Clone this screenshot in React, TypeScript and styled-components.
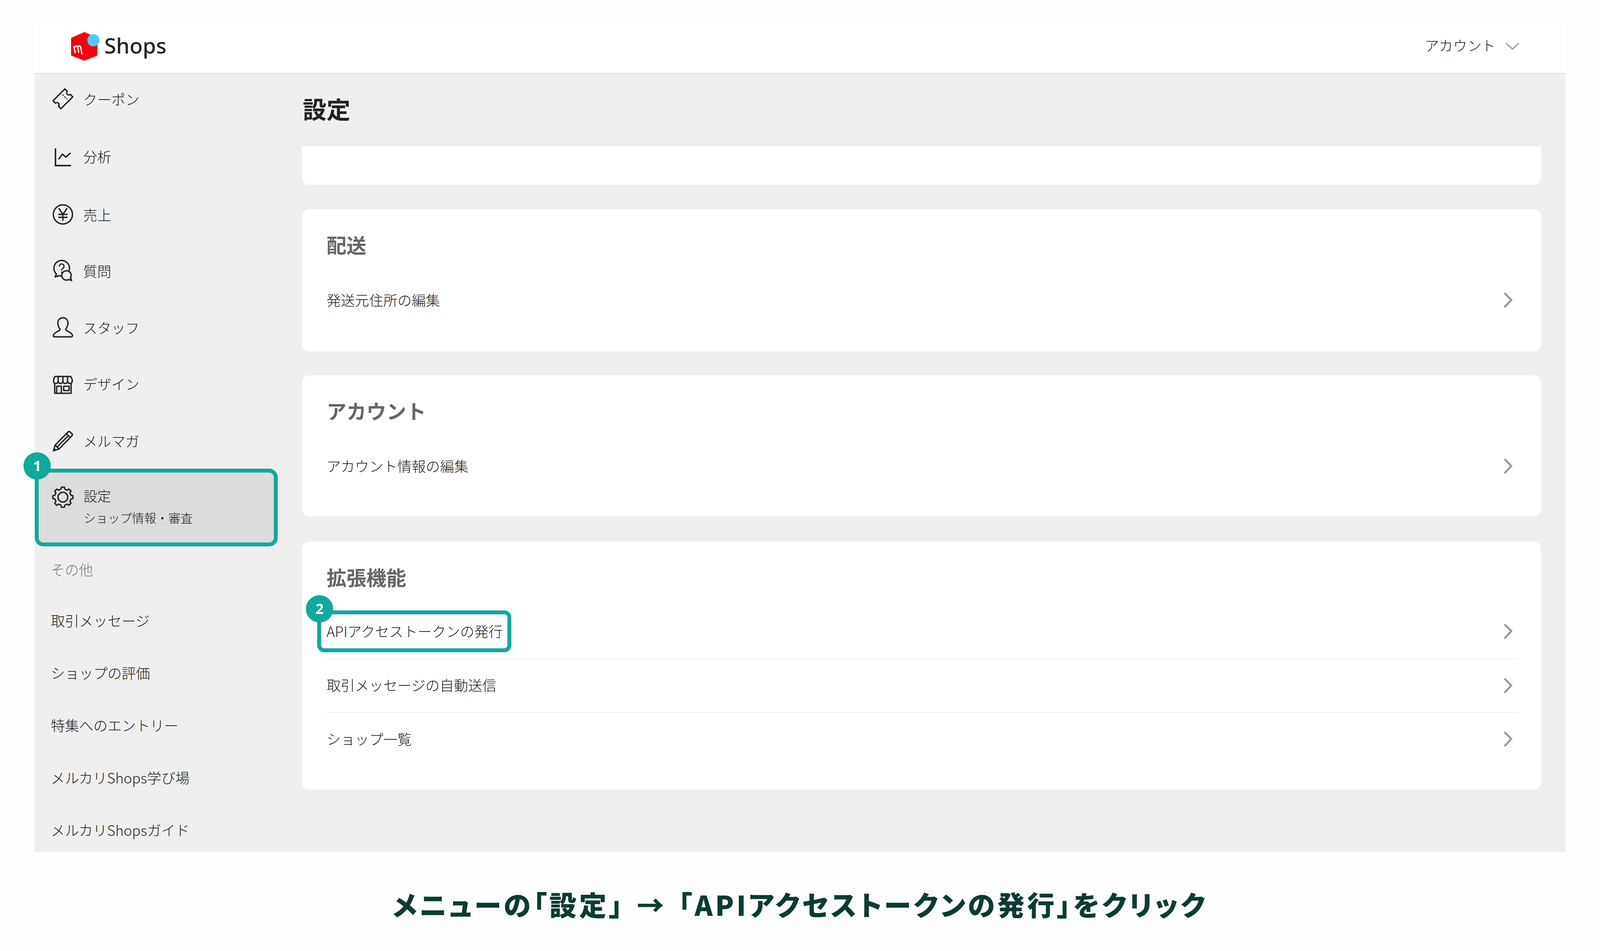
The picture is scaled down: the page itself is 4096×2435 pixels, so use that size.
import React from "react";
import styled, { createGlobalStyle } from "styled-components";

const Global = createGlobalStyle`
  html, body { margin: 0; padding: 0; width: 4096px; height: 2435px; overflow: hidden; background: #fdfdfd; }
  * { box-sizing: border-box; }
  body { font-family: "Noto Sans CJK JP", "Noto Sans", sans-serif; color: #222; }
`;

const Page = styled.div`
  width: 4096px;
  height: 2435px;
  padding: 49px 89px 0;
  display: flex;
  flex-direction: column;
  background: #fdfdfd;
`;
const Frame = styled.div`
  width: 3918px;
  height: 2133px;
  display: flex;
  flex-direction: column;
  flex: none;
`;
const Header = styled.header`
  height: 140px;
  flex: none;
  background: #fff;
  border-bottom: 2px solid #dedede;
  display: flex;
  align-items: center;
  justify-content: space-between;
  padding: 0 117px 0 93px;
`;
const Brand = styled.div`
  display: flex;
  align-items: center;
  gap: 12px;
`;
const BrandName = styled.span`
  font-family: "Noto Sans", sans-serif;
  font-size: 55px;
  font-weight: 500;
  color: #222;
  line-height: 1;
  padding-bottom: 5px;
`;
const Account = styled.div`
  display: flex;
  align-items: center;
  gap: 25px;
`;
const AccountLabel = styled.span`
  font-size: 36px;
  letter-spacing: 0.3px;
  font-weight: 300;
  padding-bottom: 7px;
`;
const Body = styled.div`
  flex: 1;
  min-height: 0;
  display: flex;
  background: #efefef;
`;
const Sidebar = styled.nav`
  width: 684px;
  flex: none;
  padding-top: 4px;
`;
const NavItem = styled.div<{ $gap: number }>`
  height: 120px;
  margin-top: ${(p) => p.$gap}px;
  padding-left: 46px;
  display: flex;
  align-items: center;
  gap: 26px;
  font-size: 36px;
  font-weight: 300;
`;
const Icon = styled.svg.attrs({ viewBox: "0 0 52 52", fill: "none" })`
  width: 52px;
  height: 52px;
  flex: none;
  overflow: visible;
  stroke: #222;
  stroke-width: 3.5;
  stroke-linecap: round;
  stroke-linejoin: round;
`;
const ActiveItem = styled.div`
  position: relative;
  width: 622px;
  height: 199px;
  margin-top: 12px;
  border: 10px solid #10a99a;
  border-radius: 22px;
  background: #dcdcdc;
  padding: 31px 0 0 36px;
  display: flex;
  gap: 27px;
`;
const GearWrap = styled.div`
  margin-top: 6px;
`;
const ActiveText = styled.div`
  display: flex;
  flex-direction: column;
`;
const ActiveTitle = styled.span`
  font-size: 35px;
  line-height: 56px;
  font-weight: 300;
`;
const ActiveSub = styled.span`
  font-size: 31px;
  line-height: 55px;
  font-weight: 300;
`;
const Badge = styled.span<{ $left: number; $top: number }>`
  position: absolute;
  left: ${(p) => p.$left}px;
  top: ${(p) => p.$top}px;
  width: 70px;
  height: 70px;
  border-radius: 50%;
  background: #10a99a;
  color: #fff;
  display: flex;
  align-items: center;
  justify-content: center;
  font-family: "Noto Sans", sans-serif;
  font-size: 36px;
  font-weight: 700;
  line-height: 1;
`;
const SubHeading = styled.div`
  margin-top: 28px;
  height: 60px;
  padding-left: 41px;
  display: flex;
  align-items: center;
  font-size: 36px;
  font-weight: 300;
  color: #7c7c7c;
`;
const SubList = styled.div`
  margin-top: 34px;
`;
const SubItem = styled.div`
  height: 134px;
  padding-left: 41px;
  display: flex;
  align-items: center;
  font-size: 36.3px;
  font-weight: 300;
`;
const Main = styled.main`
  flex: 1;
  padding: 49px 62px 0 0;
`;
const Title = styled.h1`
  margin: 0 0 56px 2px;
  font-size: 61px;
  line-height: 80px;
  font-weight: 700;
  color: #222;
`;
const Stub = styled.div`
  height: 99px;
  background: #fff;
  border-radius: 0 0 18px 18px;
`;
const Card = styled.section<{ $top: number; $bottom: number }>`
  margin-top: ${(p) => p.$top}px;
  padding: 60px 61px ${(p) => p.$bottom}px 63px;
  background: #fff;
  border-radius: 18px;
`;
const CardTitle = styled.h2<{ $gap: number }>`
  margin: 0 0 ${(p) => p.$gap}px;
  font-size: 51px;
  line-height: 60px;
  font-weight: 700;
  color: #666;
`;
const Row = styled.div<{ $divider?: boolean }>`
  height: 137.5px;
  display: flex;
  align-items: center;
  justify-content: space-between;
  padding-right: 12px;
  font-size: 36.3px;
  font-weight: 300;
  border-top: ${(p) => (p.$divider ? "2px solid #eeeef0" : "none")};
`;
const RowLabel = styled.span`
  padding-bottom: 4px;
`;
const Marked = styled.span`
  position: relative;
  width: 497px;
  height: 107px;
  margin-left: -24px;
  padding-left: 14px;
  border: 10px solid #10a99a;
  border-radius: 18px;
  display: flex;
  align-items: center;
  white-space: nowrap;
`;
const Chevron = styled.svg.attrs({ viewBox: "0 0 22 39", fill: "none" })`
  width: 22px;
  height: 39px;
  flex: none;
  stroke: #999;
  stroke-width: 5;
  stroke-linecap: round;
  stroke-linejoin: round;
`;
const Caption = styled.div`
  flex: 1;
  display: flex;
  align-items: center;
  justify-content: center;
  padding: 11px 0 0 0;
  font-size: 70px;
  font-weight: 900;
  letter-spacing: 6.4px;
  font-feature-settings: "palt";
  color: #0b3b34;
  white-space: nowrap;
`;
const CaptionArrow = styled.span`
  margin: 0 30px;
`;

const gearPath = (): string => {
  const pts: string[] = [];
  const n = 8;
  for (let i = 0; i < n; i++) {
    const a = (i * 2 * Math.PI) / n - Math.PI / 2;
    const w = Math.PI / n;
    const list: [number, number][] = [
      [21, a - w * 0.62],
      [26, a - w * 0.36],
      [26, a + w * 0.36],
      [21, a + w * 0.62],
    ];
    list.forEach(([r, t]) => pts.push(`${(26 + r * Math.cos(t)).toFixed(2)} ${(26 + r * Math.sin(t)).toFixed(2)}`));
  }
  return `M${pts.join(" L")} Z`;
};

const Logo = () => (
  <svg width="73" height="73" viewBox="0 0 73 73">
    <path d="M34 1.5 L66 16 V59 L34 72 L1.5 59 V16 Z" fill="#f4000f" stroke="#f4000f" strokeWidth="3" strokeLinejoin="round" />
    <circle cx="57" cy="21" r="15.5" fill="#4ec9ff" />
    <path d="M7 37 L10.5 53 M9 40 C12 34 16 35 17 40 L19.5 52 M17 39 C19 34 24 35 25 40 L27.5 56" stroke="#fff" strokeWidth="3.2" fill="none" strokeLinecap="round" />
  </svg>
);

const TicketIcon = () => (
  <Icon>
    <g transform="rotate(-45 26 26)">
      <path d="M4.5 11.7 H47.5 V20.5 a5.5 5.5 0 0 0 0 11 V40.3 H4.5 V31.5 a5.5 5.5 0 0 0 0 -11 Z" />
      <path d="M33 18 V34" strokeDasharray="3 4.5" strokeWidth="2.4" />
    </g>
  </Icon>
);
const ChartIcon = () => (
  <Icon>
    <path d="M7 6 V50 H47" strokeWidth="3.8" strokeLinecap="butt" strokeLinejoin="miter" />
    <path d="M15.5 33 L25 20.6 L33.5 28.4 L45 18.4" />
  </Icon>
);
const YenIcon = () => (
  <Icon>
    <circle cx="26" cy="26" r="24.5" />
    <path d="M16 11 L26 26 L36 11 M26 26 V41 M15.5 26 H36.5 M15.5 33.5 H36.5" />
  </Icon>
);
const QuestionIcon = () => (
  <Icon>
    <path d="M9.5 34.7 A20 20 0 1 1 17 39 L6 42 Z" />
    <path d="M41 48.8 A12 12 0 1 1 45.5 44.5 L48.5 51 Z" fill="#efefef" />
    <path d="M17 14.5 a6 6 0 1 1 9 5.5 c-2 1.2 -3 2.4 -3 4.5" strokeWidth="3" />
    <circle cx="23" cy="30" r="1.2" strokeWidth="1.6" fill="#222" />
  </Icon>
);
const PersonIcon = () => (
  <Icon>
    <path d="M19 31 C15 26 13 21 13 15 C13 7 19 1.5 26 1.5 C33 1.5 39 7 39 15 C39 21 37 26 33 31 C33 34 36 34.5 40 37 C46 40 50 44 50.5 47 C50.5 49.5 49 50.5 47 50.5 H5 C3 50.5 1.5 49.5 1.5 47 C2 44 6 40 12 37 C16 34.5 19 34 19 31 Z" />
  </Icon>
);
const ShopIcon = () => (
  <Icon>
    <path d="M6 8 H46 C49 12 50 16 50 20 a6 6 0 0 1 -12 0 a6 6 0 0 1 -12 0 a6 6 0 0 1 -12 0 a6 6 0 0 1 -12 0 C2 16 3 12 6 8 Z" />
    <path d="M14 8 V20 M26 8 V20 M38 8 V20" />
    <path d="M5 26 V51 H47 V26" />
    <path d="M10 51 V33 H22 V51" />
    <rect x="28" y="33" width="14" height="11" />
  </Icon>
);
const PencilIcon = () => (
  <Icon>
    <g transform="translate(2 52) rotate(-45.6)">
      <path d="M0 0 L13 -7 H60 Q64 -7 64 -3 V3 Q64 7 60 7 H13 Z" />
      <path d="M13 -7 V7 M14 0 H54 M54 -7 V7" />
      <path d="M0 0 L5 -2.6 V2.6 Z" fill="#222" />
    </g>
  </Icon>
);
const GearIcon = () => (
  <Icon>
    <path d={gearPath()} />
    <circle cx="26" cy="26" r="12.5" />
  </Icon>
);
const RowChevron = () => (
  <Chevron>
    <path d="M3 3 L19 19 L3 36" />
  </Chevron>
);

const navItems: { label: string; gap: number; icon: React.ReactNode }[] = [
  { label: "クーポン", gap: 0, icon: <TicketIcon /> },
  { label: "分析", gap: 27, icon: <ChartIcon /> },
  { label: "売上", gap: 29, icon: <YenIcon /> },
  { label: "質問", gap: 24, icon: <QuestionIcon /> },
  { label: "スタッフ", gap: 25, icon: <PersonIcon /> },
  { label: "デザイン", gap: 24, icon: <ShopIcon /> },
  { label: "メルマガ", gap: 26, icon: <PencilIcon /> },
];
const subItems = ["取引メッセージ", "ショップの評価", "特集へのエントリー", "メルカリShops学び場", "メルカリShopsガイド"];

export default function App() {
  return (
    <Page>
      <Global />
      <Frame>
        <Header>
          <Brand>
            <Logo />
            <BrandName>Shops</BrandName>
          </Brand>
          <Account>
            <AccountLabel>アカウント</AccountLabel>
            <svg width="36" height="18" viewBox="0 0 36 18" fill="none">
              <path d="M1.5 1.5 L18 16.5 L34.5 1.5" stroke="#999" strokeWidth="3" />
            </svg>
          </Account>
        </Header>
        <Body>
          <Sidebar>
            {navItems.map((n) => (
              <NavItem key={n.label} $gap={n.gap}>
                {n.icon}
                {n.label}
              </NavItem>
            ))}
            <ActiveItem>
              <Badge $left={-39} $top={-52}>1</Badge>
              <GearWrap>
                <GearIcon />
              </GearWrap>
              <ActiveText>
                <ActiveTitle>設定</ActiveTitle>
                <ActiveSub>ショップ情報・審査</ActiveSub>
              </ActiveText>
            </ActiveItem>
            <SubHeading>その他</SubHeading>
            <SubList>
              {subItems.map((s) => (
                <SubItem key={s}>{s}</SubItem>
              ))}
            </SubList>
          </Sidebar>
          <Main>
            <Title>設定</Title>
            <Stub />
            <Card $top={63} $bottom={62.5}>
              <CardTitle $gap={44}>配送</CardTitle>
              <Row>
                <RowLabel>発送元住所の編集</RowLabel>
                <RowChevron />
              </Row>
            </Card>
            <Card $top={61} $bottom={59.5}>
              <CardTitle $gap={44}>アカウント</CardTitle>
              <Row>
                <RowLabel>アカウント情報の編集</RowLabel>
                <RowChevron />
              </Row>
            </Card>
            <Card $top={65} $bottom={61.5}>
              <CardTitle $gap={41}>拡張機能</CardTitle>
              <Row>
                <Marked>
                  <Badge $left={-39} $top={-49}>2</Badge>
                  <RowLabel>APIアクセストークンの発行</RowLabel>
                </Marked>
                <RowChevron />
              </Row>
              <Row $divider>
                <RowLabel>取引メッセージの自動送信</RowLabel>
                <RowChevron />
              </Row>
              <Row $divider>
                <RowLabel>ショップ一覧</RowLabel>
                <RowChevron />
              </Row>
            </Card>
          </Main>
        </Body>
      </Frame>
      <Caption>
        メニューの「設定」
        <CaptionArrow>→</CaptionArrow>
        「APIアクセストークンの発行」をクリック
      </Caption>
    </Page>
  );
}
